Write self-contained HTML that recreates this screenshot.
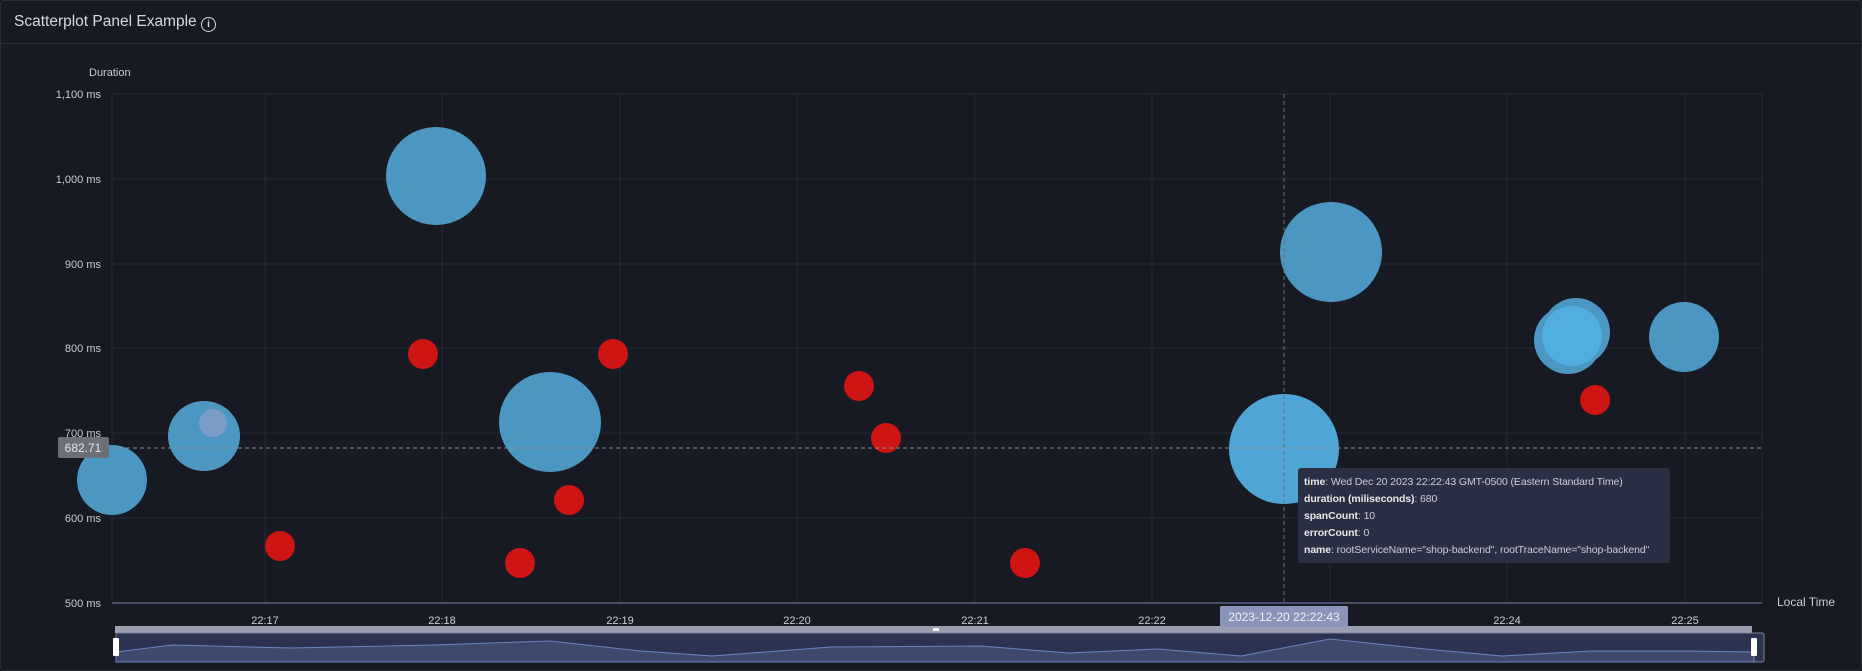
<!DOCTYPE html>
<html><head><meta charset="utf-8"><style>
html,body{margin:0;padding:0;background:#111217;}
body{width:1862px;height:671px;overflow:hidden;font-family:"Liberation Sans",sans-serif;}
.panel{position:absolute;left:0;top:0;width:1860px;height:669px;border:1px solid #2a2d35;border-radius:3px;background:#171a22;}
.title{position:absolute;left:13px;top:12px;color:#d8d9dd;font-size:15.5px;}
.hdr{position:absolute;left:0;top:42px;width:1860px;height:1px;background:#2a2d37;}
svg{position:absolute;left:0;top:0;}
.tt{position:absolute;left:1298px;top:468px;width:372px;height:95px;background:#2b2f43;border-radius:3px;color:#ccced6;font-size:10.5px;box-sizing:border-box;padding:6px 0 0 6px;line-height:17px;white-space:nowrap;letter-spacing:-0.1px;}
.tt b{color:#e6e7ea;}
</style></head><body>
<div class="panel">
<div class="title">Scatterplot Panel Example <span style="display:inline-block;width:13px;height:13px;border:1.5px solid #d8d9dd;border-radius:50%;font-size:10px;line-height:13px;text-align:center;vertical-align:-1px;font-weight:bold">i</span></div>
<div class="hdr"></div>
</div>
<svg width="1862" height="671" viewBox="0 0 1862 671" font-family="Liberation Sans, sans-serif">
<g stroke="#262a35" stroke-width="1">
<line x1="112" y1="94" x2="1762" y2="94"/><line x1="112" y1="179" x2="1762" y2="179"/><line x1="112" y1="264" x2="1762" y2="264"/><line x1="112" y1="348" x2="1762" y2="348"/><line x1="112" y1="433" x2="1762" y2="433"/><line x1="112" y1="518" x2="1762" y2="518"/>
<line x1="112" y1="94" x2="112" y2="603"/>
<line x1="265" y1="94" x2="265" y2="603"/><line x1="442" y1="94" x2="442" y2="603"/><line x1="620" y1="94" x2="620" y2="603"/><line x1="797" y1="94" x2="797" y2="603"/><line x1="975" y1="94" x2="975" y2="603"/><line x1="1152" y1="94" x2="1152" y2="603"/><line x1="1330" y1="94" x2="1330" y2="603"/><line x1="1507" y1="94" x2="1507" y2="603"/><line x1="1685" y1="94" x2="1685" y2="603"/><line x1="1762" y1="94" x2="1762" y2="603"/>
</g>
<line x1="112" y1="603" x2="1762" y2="603" stroke="#5a6080" stroke-width="1.5"/>
<g fill="#ccccd0" font-size="11" text-anchor="end">
<text x="101" y="98">1,100 ms</text><text x="101" y="183">1,000 ms</text><text x="101" y="268">900 ms</text><text x="101" y="352">800 ms</text><text x="101" y="437">700 ms</text><text x="101" y="522">600 ms</text><text x="101" y="607">500 ms</text>
</g>
<text x="89" y="76" fill="#ccccd0" font-size="11">Duration</text>
<text x="1777" y="606" fill="#ccccd0" font-size="12">Local Time</text>
<g fill="#ccccd0" font-size="11" text-anchor="middle">
<text x="265" y="624">22:17</text><text x="442" y="624">22:18</text><text x="620" y="624">22:19</text><text x="797" y="624">22:20</text><text x="975" y="624">22:21</text><text x="1152" y="624">22:22</text><text x="1507" y="624">22:24</text><text x="1685" y="624">22:25</text>
</g>
<g fill="#4b97c2">
<ellipse cx="112" cy="480" rx="35" ry="35"/>
<ellipse cx="204" cy="436" rx="36" ry="35"/>
<ellipse cx="436" cy="176" rx="50" ry="49"/>
<ellipse cx="550" cy="422" rx="51" ry="50"/>
<ellipse cx="1331" cy="252" rx="51" ry="50"/>
<ellipse cx="1576" cy="332" rx="34" ry="34"/>
<ellipse cx="1568" cy="340" rx="34" ry="34"/>
<ellipse cx="1684" cy="337" rx="35" ry="35"/>
</g>
<ellipse cx="213" cy="423" rx="14" ry="14" fill="#7a9cc6"/>
<ellipse cx="1572" cy="336" rx="30" ry="30" fill="#52ade0"/>
<ellipse cx="1284" cy="449" rx="55" ry="55" fill="#4fa6d6"/>
<g fill="#cf1414">
<circle cx="280" cy="546" r="15"/><circle cx="423" cy="354" r="15"/><circle cx="520" cy="563" r="15"/><circle cx="569" cy="500" r="15"/><circle cx="613" cy="354" r="15"/><circle cx="859" cy="386" r="15"/><circle cx="886" cy="438" r="15"/><circle cx="1025" cy="563" r="15"/><circle cx="1595" cy="400" r="15"/>
</g>
<line x1="112" y1="448" x2="1762" y2="448" stroke="#8a8c94" stroke-dasharray="4,3"/>
<line x1="1284" y1="94" x2="1284" y2="603" stroke="#6a6e7a" stroke-dasharray="4,3"/>
<rect x="58" y="437" width="51" height="21" rx="2" fill="#6b6f78"/>
<text x="83" y="452" fill="#e6e7ea" font-size="12" text-anchor="middle">682.71</text>
<rect x="115" y="626" width="1637" height="7" fill="#9aa0b2"/>
<rect x="116" y="633" width="1648" height="29" fill="#2b3350" stroke="#7a8299" rx="2"/>
<path d="M116,652 L172,645 L291,648 L433,645 L550,641 L641,651 L712,656 L831,647 L980,646 L1069,653 L1158,649 L1241,656 L1330,639 L1425,649 L1502,656 L1591,651 L1686,651 L1754,652 L1754,662 L116,662 Z" fill="#3d4a6b" stroke="#6b85c0" stroke-width="1"/>
<rect x="113" y="638" width="6" height="18" rx="1" fill="#fff"/>
<rect x="1751" y="638" width="6" height="18" rx="1" fill="#fff"/>
<rect x="933" y="628" width="6" height="3" fill="#fff"/>
<rect x="1220" y="606" width="128" height="21" rx="2" fill="#8a93b8"/>
<text x="1284" y="621" fill="#f0f1f5" font-size="12" text-anchor="middle">2023-12-20 22:22:43</text>
</svg>
<div class="tt">
<div><b>time</b>: Wed Dec 20 2023 22:22:43 GMT-0500 (Eastern Standard Time)</div>
<div><b>duration (miliseconds)</b>: 680</div>
<div><b>spanCount</b>: 10</div>
<div><b>errorCount</b>: 0</div>
<div><b>name</b>: rootServiceName="shop-backend", rootTraceName="shop-backend"</div>
</div>
</body></html>
